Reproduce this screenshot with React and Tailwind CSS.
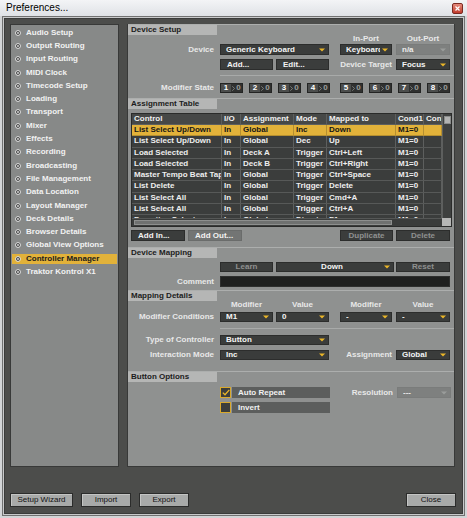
import clsx from "clsx";

const menu = [
  "Audio Setup",
  "Output Routing",
  "Input Routing",
  "MIDI Clock",
  "Timecode Setup",
  "Loading",
  "Transport",
  "Mixer",
  "Effects",
  "Recording",
  "Broadcasting",
  "File Management",
  "Data Location",
  "Layout Manager",
  "Deck Details",
  "Browser Details",
  "Global View Options",
  "Controller Manager",
  "Traktor Kontrol X1",
];

const colW = ["w-[90px]", "w-[19px]", "w-[53px]", "w-[33px]", "w-[69px]", "w-[28px]", "w-[18px]"];
const head = ["Control", "I/O", "Assignment", "Mode", "Mapped to", "Cond1", "Cond2"];

const rows = [
  ["List Select Up/Down", "In", "Global", "Inc", "Down", "M1=0", ""],
  ["List Select Up/Down", "In", "Global", "Dec", "Up", "M1=0", ""],
  ["Load Selected", "In", "Deck A", "Trigger", "Ctrl+Left", "M1=0", ""],
  ["Load Selected", "In", "Deck B", "Trigger", "Ctrl+Right", "M1=0", ""],
  ["Master Tempo Beat Tap", "In", "Global", "Trigger", "Ctrl+Space", "M1=0", ""],
  ["List Delete", "In", "Global", "Trigger", "Delete", "M1=0", ""],
  ["List Select All", "In", "Global", "Trigger", "Cmd+A", "M1=0", ""],
  ["List Select All", "In", "Global", "Trigger", "Ctrl+A", "M1=0", ""],
  ["Favorites Selector", "In", "Global", "Direct", "F1", "M1=0", ""],
];

const Bullet = () => (
  <svg width="6" height="6" viewBox="0 0 6 6" className="shrink-0">
    <circle cx="3" cy="3" r="2.4" fill="#2c2d2c" stroke="#ececec" strokeWidth="1" />
    <circle cx="3" cy="3" r="0.9" fill="#ececec" />
  </svg>
);

function Drop({ w, text, off, center }) {
  return (
    <div
      className={clsx(
        "h-full flex items-center pl-[5px] pr-[3px] shrink-0 border border-[#2c2d2c]",
        w,
        off ? "bg-[#7e807f] text-[#ececec] border-[#7a7c7b]" : "bg-[#3a3c3b] text-[#f4f4f4]"
      )}
    >
      <span className={clsx("flex-1 overflow-hidden whitespace-nowrap text-[8px] font-bold leading-none", center && "text-center")}>
        {text}
      </span>
      <svg width="6" height="4" viewBox="0 0 6 4" className="ml-[2px] shrink-0">
        <path d="M0 0.5H6L3 3.5Z" fill={off ? "#9a9c9b" : "#eab628"} />
      </svg>
    </div>
  );
}

function Btn({ w, text, off, light, center }) {
  return (
    <div
      className={clsx(
        "h-full flex items-center shrink-0 text-[8px] font-bold leading-none whitespace-nowrap border",
        w,
        center ? "justify-center" : "pl-[6px]",
        light ? "bg-[#737574] border-[#6a6c6b]" : "bg-[#3b3d3c] border-[#2c2d2c]",
        off ? "text-[#8f9190]" : "text-[#f2f2f2]"
      )}
    >
      {text}
    </div>
  );
}

function Mod({ n }) {
  return (
    <div className="w-[23px] h-full flex items-center bg-[#303130] border border-[#242524] shrink-0">
      <div className="w-[10px] h-full bg-[#4c4e4d] flex items-center justify-center text-[8px] font-bold text-white leading-none">
        {n}
      </div>
      <svg width="3" height="5" viewBox="0 0 3 5" className="ml-[1px]">
        <path d="M0.3 0.3L2.6 2.5L0.3 4.7" fill="none" stroke="#8c8e8d" strokeWidth="0.8" />
      </svg>
      <span className="flex-1 text-center text-[8px] font-bold text-[#9c9e9d] leading-none">0</span>
    </div>
  );
}

function Label({ w = "w-[86px]", children }) {
  return (
    <div className={clsx("shrink-0 text-right text-[8px] font-bold leading-none whitespace-nowrap text-[#e8e8e8]", w)}>
      {children}
    </div>
  );
}

function Section({ title, className, children }) {
  return (
    <div className={clsx("border-t border-[#acaead] flex flex-col", className)}>
      <div className="w-[89px] h-[10px] bg-[#b5b6b5] pl-[3px] flex items-center text-[8px] font-bold leading-none text-[#1c1c1c]">
        {title}
      </div>
      {children}
    </div>
  );
}

const Sep = ({ className }) => <div className={clsx("ml-[92px] h-[1px] bg-[#a8aaa9]", className)} />;

function Table() {
  return (
    <div className="ml-[3px] w-[321px] h-[114px] border border-[#2a2b2a] flex flex-col bg-[#3b3d3c]">
      <div className="flex h-[104px]">
        <div className="w-[310px] flex flex-col overflow-hidden">
          <div className="h-[11px] flex shrink-0 bg-[#464847] border-b border-[#5d5f5e] text-[#f0f0f0]">
            {head.map((h, i) => (
              <div
                key={h}
                className={clsx(
                  "h-full shrink-0 overflow-hidden whitespace-nowrap pl-[2px] border-r border-[#5d5f5e] flex items-center text-[8px] font-bold leading-none",
                  colW[i]
                )}
              >
                {h}
              </div>
            ))}
          </div>
          {rows.map((r, ri) => {
            const sel = ri === 0;
            return (
              <div
                key={ri}
                className={clsx(
                  "h-[11.25px] flex shrink-0 border-b",
                  sel ? "bg-[#e2b23a] text-[#151515] border-[#b58f30]" : "text-[#eeeeee] border-[#575958]"
                )}
              >
                {r.map((c, i) => (
                  <div
                    key={i}
                    className={clsx(
                      "h-full shrink-0 overflow-hidden whitespace-nowrap pl-[2px] border-r flex items-center text-[8px] font-bold leading-none",
                      colW[i],
                      sel ? "border-[#b58f30]" : "border-[#5d5f5e]"
                    )}
                  >
                    {c}
                  </div>
                ))}
              </div>
            );
          })}
        </div>
        <div className="w-[9px] bg-[#3e403f] border-l border-[#5d5f5e] flex flex-col items-center pt-[2px]">
          <div className="w-[7px] h-[8px] bg-[#b2b3b2] border border-[#8a8c8b]" />
        </div>
      </div>
      <div className="flex h-[8px]">
        <div className="w-[310px] bg-[#3a3c3b] border-t border-[#555756] pl-[2px] pt-[1px]">
          <div className="w-[258px] h-[5px] bg-[#6f7170] border border-[#8d8f8e]" />
        </div>
        <div className="w-[9px] bg-[#b6b7b6]" />
      </div>
    </div>
  );
}

export default function App() {
  return (
    <div className="w-[467px] h-[518px] flex flex-col bg-[#d6d9dc] font-['Liberation_Sans',Arial,sans-serif] overflow-hidden">
      <div className="h-[16px] shrink-0 flex items-center justify-between pl-[6px] pr-[4px] bg-linear-to-b from-[#f3f4f6] to-[#dfe2e6]">
        <span className="text-[10px] leading-none text-black font-['Liberation_Sans_Narrow','Liberation_Sans',sans-serif]">
          Preferences...
        </span>
        <div className="w-[11px] h-[11px] rounded-[2px] bg-linear-to-b from-[#e48a7c] to-[#c0392b] border border-[#7c2a22] flex items-center justify-center">
          <svg width="5" height="5" viewBox="0 0 5 5">
            <path d="M0.5 0.5L4.5 4.5M4.5 0.5L0.5 4.5" stroke="#fff" strokeWidth="1.2" />
          </svg>
        </div>
      </div>

      <div className="flex-1 flex flex-col border-x-2 border-b-2 border-[#d3d5d7]">
        <div className="flex-1 flex flex-col border border-[#707171]">
          <div className="flex-1 flex flex-col border border-[#c8c9ca]">
            <div className="flex-1 flex flex-col bg-[#4c4d4b] border border-[#3a3b3a] pl-[5px] pr-[5px] pt-[5px]">
              <div className="flex h-[443px] gap-[8px]">
                {/* sidebar */}
                <div className="w-[109px] h-full bg-[#878988] border border-[#383938] pt-[1px] flex flex-col">
                  {menu.map((m) => {
                    const on = m === "Controller Manager";
                    return (
                      <div key={m} className="h-[13.3px] shrink-0 flex items-center px-[1px]">
                        <div
                          className={clsx(
                            "h-[10px] w-full flex items-center pl-[3px] gap-[5px] text-[8px] font-bold leading-none whitespace-nowrap",
                            on ? "bg-[#e2b23a] text-[#1a1a1a]" : "text-[#f2f2f2]"
                          )}
                        >
                          <Bullet />
                          {m}
                        </div>
                      </div>
                    );
                  })}
                </div>

                {/* main panel */}
                <div className="w-[328px] h-full bg-[#8f9190] border-x border-b border-[#383938] flex flex-col">
                  <Section title="Device Setup" className="pb-[5px]">
                    <div className="h-[8px] flex items-center ml-[212px] text-[8px] font-bold leading-none text-[#e8e8e8]">
                      <div className="w-[52px] text-center">In-Port</div>
                      <div className="w-[54px] ml-[4px] text-center">Out-Port</div>
                    </div>
                    <div className="h-[11px] mt-[1px] flex items-center">
                      <Label>Device</Label>
                      <div className="ml-[6px] h-full flex">
                        <Drop w="w-[109px]" text="Generic Keyboard" />
                        <div className="ml-[11px]" />
                        <Drop w="w-[52px]" text="Keyboard" />
                        <div className="ml-[4px]" />
                        <Drop w="w-[54px]" text="n/a" off />
                      </div>
                    </div>
                    <div className="h-[11px] mt-[4px] flex items-center">
                      <Label />
                      <div className="ml-[6px] h-full flex items-center">
                        <Btn w="w-[53px]" text="Add..." />
                        <div className="ml-[3px]" />
                        <Btn w="w-[53px]" text="Edit..." />
                        <div className="ml-[11px]" />
                        <Label w="w-[52px]">Device Target</Label>
                        <div className="ml-[4px]" />
                        <Drop w="w-[54px]" text="Focus" />
                      </div>
                    </div>
                    <Sep className="mt-[5px]" />
                    <div className="h-[10px] mt-[7px] flex items-center">
                      <Label>Modifier State</Label>
                      <div className="ml-[6px] h-full flex gap-[6px]">
                        <Mod n="1" />
                        <Mod n="2" />
                        <Mod n="3" />
                        <Mod n="4" />
                      </div>
                      <div className="ml-[10px] h-full flex gap-[6px]">
                        <Mod n="5" />
                        <Mod n="6" />
                        <Mod n="7" />
                        <Mod n="8" />
                      </div>
                    </div>
                  </Section>

                  <Section title="Assignment Table" className="pb-[6px]">
                    <div className="mt-[4px]">
                      <Table />
                    </div>
                    <div className="h-[11px] mt-[3px] ml-[3px] flex">
                      <Btn w="w-[54px]" text="Add In..." />
                      <div className="ml-[3px]" />
                      <Btn w="w-[54px]" text="Add Out..." light />
                      <div className="ml-[98px]" />
                      <Btn w="w-[53px]" text="Duplicate" off center />
                      <div className="ml-[3px]" />
                      <Btn w="w-[54px]" text="Delete" off center />
                    </div>
                  </Section>

                  <Section title="Device Mapping" className="pb-[3px]">
                    <div className="h-[10px] mt-[4px] ml-[92px] flex">
                      <Btn w="w-[53px]" text="Learn" off center />
                      <div className="ml-[3px]" />
                      <Drop w="w-[118px]" text="Down" center />
                      <div className="ml-[2px]" />
                      <Btn w="w-[54px]" text="Reset" off center />
                    </div>
                    <div className="h-[11px] mt-[4px] flex items-center">
                      <Label>Comment</Label>
                      <div className="ml-[6px] w-[230px] h-full bg-[#1f201f] border border-[#2e2f2e]" />
                    </div>
                  </Section>

                  <Section title="Mapping Details" className="pb-[11px]">
                    <div className="h-[8px] flex items-center ml-[92px] text-[8px] font-bold leading-none text-[#e8e8e8]">
                      <div className="w-[53px] text-center">Modifier</div>
                      <div className="w-[53px] ml-[3px] text-center">Value</div>
                      <div className="w-[52px] ml-[11px] text-center">Modifier</div>
                      <div className="w-[54px] ml-[4px] text-center">Value</div>
                    </div>
                    <div className="h-[10px] mt-[3px] flex items-center">
                      <Label>Modifier Conditions</Label>
                      <div className="ml-[6px] h-full flex">
                        <Drop w="w-[53px]" text="M1" />
                        <div className="ml-[3px]" />
                        <Drop w="w-[53px]" text="0" />
                        <div className="ml-[11px]" />
                        <Drop w="w-[52px]" text="-" />
                        <div className="ml-[4px]" />
                        <Drop w="w-[54px]" text="-" />
                      </div>
                    </div>
                    <Sep className="mt-[6px]" />
                    <div className="h-[10px] mt-[6px] flex items-center">
                      <Label>Type of Controller</Label>
                      <div className="ml-[6px] h-full flex">
                        <Drop w="w-[109px]" text="Button" />
                      </div>
                    </div>
                    <div className="h-[10px] mt-[5px] flex items-center">
                      <Label>Interaction Mode</Label>
                      <div className="ml-[6px] h-full flex items-center">
                        <Drop w="w-[109px]" text="Inc" />
                        <div className="ml-[11px]" />
                        <Label w="w-[52px]">Assignment</Label>
                        <div className="ml-[4px]" />
                        <Drop w="w-[54px]" text="Global" />
                      </div>
                    </div>
                  </Section>

                  <Section title="Button Options" className="flex-1">
                    <div className="h-[11px] mt-[5px] ml-[92px] flex items-center">
                      <div className="w-[11px] h-[11px] border border-[#d9a92c] bg-[#3b3d3c] flex items-center justify-center">
                        <svg width="8" height="7" viewBox="0 0 8 7">
                          <path d="M0.8 3.6L3 5.8L7.3 0.9" fill="none" stroke="#eab628" strokeWidth="1.3" />
                        </svg>
                      </div>
                      <div className="ml-[1px] w-[98px] h-full bg-[#5c5e5d] pl-[6px] flex items-center text-[8px] font-bold leading-none text-[#f0f0f0]">
                        Auto Repeat
                      </div>
                      <div className="ml-[11px]" />
                      <Label w="w-[52px]">Resolution</Label>
                      <div className="ml-[4px] h-full flex">
                        <Drop w="w-[54px]" text="---" off />
                      </div>
                    </div>
                    <div className="h-[11px] mt-[4px] ml-[92px] flex items-center">
                      <div className="w-[11px] h-[11px] border border-[#d9a92c] bg-[#3b3d3c]" />
                      <div className="ml-[1px] w-[98px] h-full bg-[#5c5e5d] pl-[6px] flex items-center text-[8px] font-bold leading-none text-[#f0f0f0]">
                        Invert
                      </div>
                    </div>
                  </Section>
                </div>
              </div>

              {/* footer buttons */}
              <div className="h-[14px] mt-[26px] flex text-[8px] leading-none text-[#111]">
                {[
                  ["Setup Wizard", "w-[63px]", ""],
                  ["Import", "w-[50px]", "ml-[8px]"],
                  ["Export", "w-[50px]", "ml-[8px]"],
                ].map(([t, w, m]) => (
                  <div
                    key={t}
                    className={clsx(
                      "h-full flex items-center justify-center bg-[#a8aaa9] border border-[#2b2c2b] shadow-[inset_1px_1px_0_#c4c5c4]",
                      w,
                      m
                    )}
                  >
                    {t}
                  </div>
                ))}
                <div className="ml-auto mr-[1px] w-[50px] h-full flex items-center justify-center bg-[#a8aaa9] border border-[#2b2c2b] shadow-[inset_1px_1px_0_#c4c5c4]">
                  Close
                </div>
              </div>
            </div>
          </div>
        </div>
      </div>
    </div>
  );
}
